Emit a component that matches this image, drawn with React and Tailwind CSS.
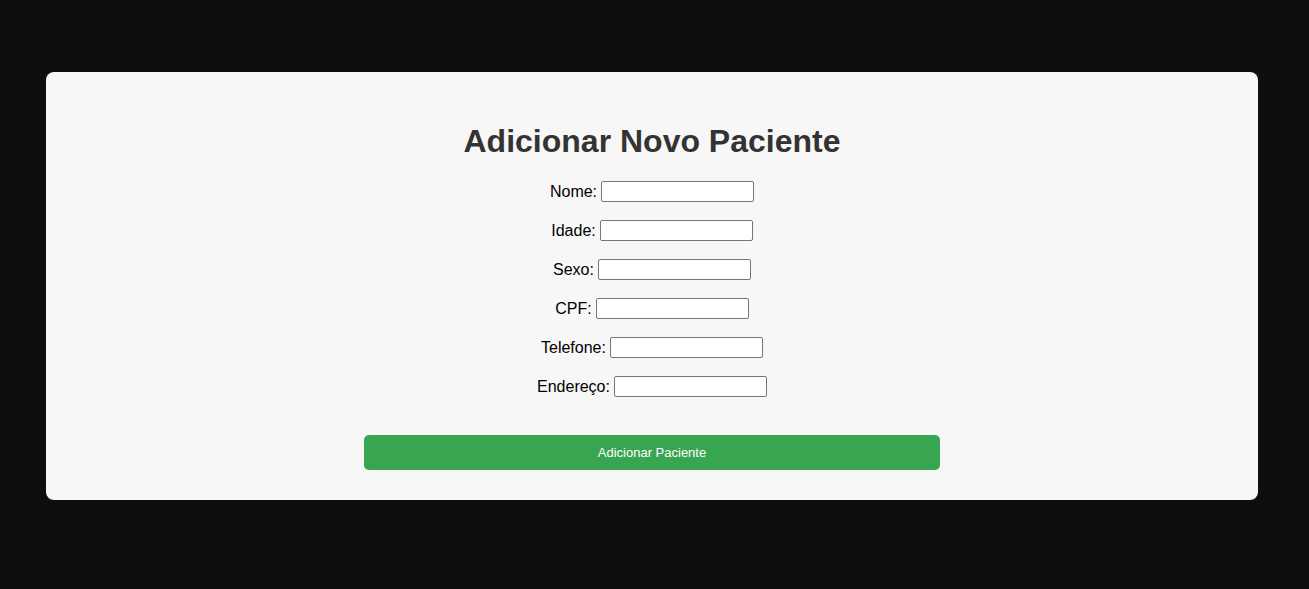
export default function App() {
  const fields = ["Nome", "Idade", "Sexo", "CPF", "Telefone", "Endereço"];

  return (
    <div className="min-h-[589px] bg-[#0e0e0e] pl-[46px] pr-[51px] pt-[72px] pb-[89px] font-['Liberation_Sans',Arial,sans-serif]">
      <div className="rounded-lg bg-[#f7f7f7] pt-[51px] pb-[30px]">
        <h1 className="text-center text-[32px] font-bold leading-[37px] text-[#333]">
          Adicionar Novo Paciente
        </h1>

        <form className="mt-[21px] flex flex-col items-center" onSubmit={(e) => e.preventDefault()}>
          <div className="flex flex-col gap-[18px]">
            {fields.map((f) => (
              <div key={f} className="flex h-[21px] items-center justify-center text-[16px] text-black">
                <label htmlFor={f}>{f}:</label>
                <input
                  id={f}
                  type="text"
                  className="ml-[4px] h-[21px] w-[153px] rounded-[2px] border border-[#767676] bg-white px-[2px] text-[13px]"
                />
              </div>
            ))}
          </div>

          <button
            type="submit"
            className="mt-[38px] h-[35px] w-[576px] rounded-[5px] bg-[#38a550] text-[13px] text-white"
          >
            Adicionar Paciente
          </button>
        </form>
      </div>
    </div>
  );
}
